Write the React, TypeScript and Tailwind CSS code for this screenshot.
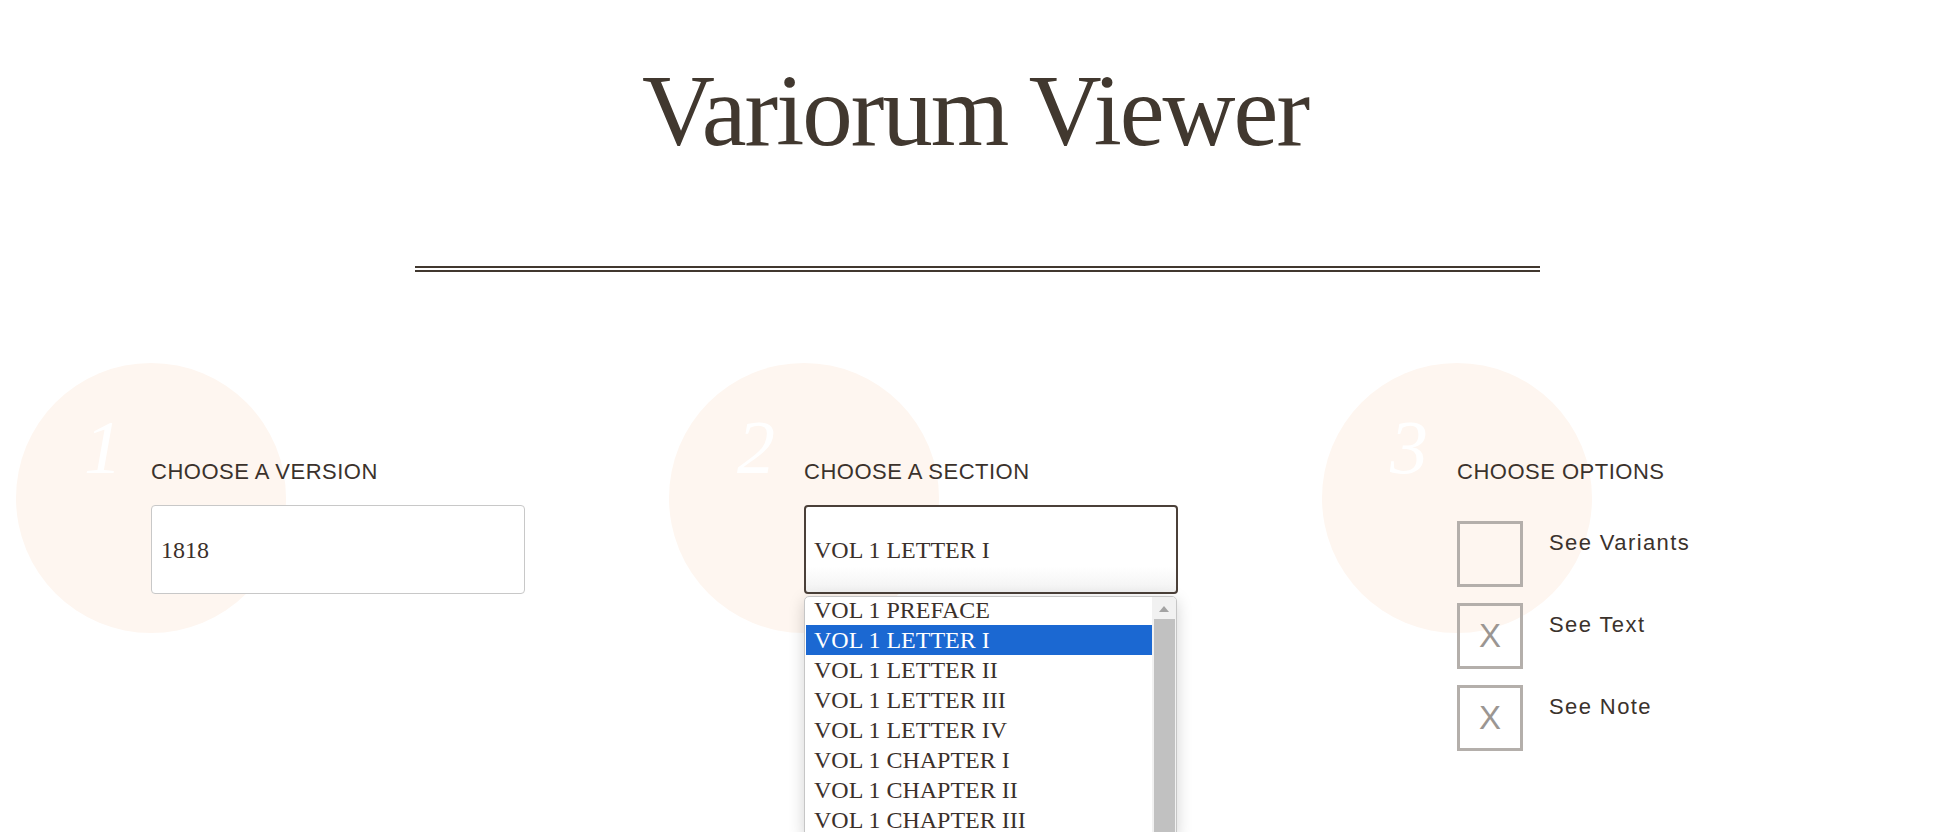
import React from "react";

const sections = [
  "VOL 1 PREFACE",
  "VOL 1 LETTER I",
  "VOL 1 LETTER II",
  "VOL 1 LETTER III",
  "VOL 1 LETTER IV",
  "VOL 1 CHAPTER I",
  "VOL 1 CHAPTER II",
  "VOL 1 CHAPTER III",
];

const options = [
  { label: "See Variants", checked: false },
  { label: "See Text", checked: true },
  { label: "See Note", checked: true },
];

function Step({ n, children }: { n: string; children: React.ReactNode }) {
  return (
    <div className="relative w-[653px] shrink-0">
      <div className="absolute left-0 top-0 size-[270px] rounded-full bg-[#fef6f0]">
        <span className="block pl-[68px] pt-[46px] font-['Liberation_Serif',serif] text-[76px] italic leading-none text-white">
          {n}
        </span>
      </div>
      <div className="relative pl-[135px] pt-[98px]">{children}</div>
    </div>
  );
}

function Heading({ children }: { children: React.ReactNode }) {
  return (
    <h2 className="font-['Liberation_Sans',sans-serif] text-[22px] leading-none tracking-[0.5px] text-[#3b322c]">
      {children}
    </h2>
  );
}

export default function App() {
  return (
    <div className="h-[832px] overflow-hidden bg-white">
      <h1 className="pl-2 pt-[61px] text-center font-['Liberation_Serif',serif] text-[101px] leading-none tracking-[-2px] text-[#41382f]">
        Variorum Viewer
      </h1>
      <div className="mt-[104px] pl-[13px]">
        <div className="mx-auto h-[6px] w-[1125px] border-y-2 border-[#41382f]" />
      </div>

      <div className="mt-[91px] flex pl-[16px]">
        <Step n="1">
          <Heading>CHOOSE A VERSION</Heading>
          <div className="mt-[22px] flex h-[89px] w-[374px] items-center rounded-[4px] border border-[#c8c8c8] bg-white px-[9px] font-['Liberation_Serif',serif] text-[24px] text-[#3b302a]">
            1818
          </div>
        </Step>

        <Step n="2">
          <Heading>CHOOSE A SECTION</Heading>
          <div className="mt-[22px] flex h-[89px] w-[374px] items-center rounded-[4px] border-2 border-[#4b4039] bg-linear-to-b from-white from-70% to-[#f2f2f2] px-[8px] font-['Liberation_Serif',serif] text-[24px] text-[#3b302a]">
            VOL 1 LETTER I
          </div>
          <div className="mt-[2px] flex w-[373px] overflow-hidden rounded-t-[5px] border border-[#c6c6c6] bg-white shadow-[0_4px_16px_rgba(0,0,0,0.18)]">
            <ul className="-mt-[2px] flex-1 pl-px font-['Liberation_Serif',serif] text-[24px] leading-[30px] text-[#3b302a]">
              {sections.map((s, i) => (
                <li key={s} className={i === 1 ? "bg-[#1b68d2] pl-[8px] text-white" : "pl-[8px]"}>
                  {s}
                </li>
              ))}
            </ul>
            <div className="flex w-[24px] flex-col items-center bg-[#f1f1f1]">
              <svg width="10" height="6" viewBox="0 0 10 6" className="mt-[9px]">
                <path d="M5 0L10 6H0Z" fill="#a3a3a3" />
              </svg>
              <div className="mt-[7px] w-[21px] flex-1 bg-[#c1c1c1]" />
            </div>
          </div>
        </Step>

        <Step n="3">
          <Heading>CHOOSE OPTIONS</Heading>
          <div className="mt-[38px] flex flex-col gap-4">
            {options.map((o) => (
              <div key={o.label} className="flex items-start">
                <div className="flex size-[66px] items-center justify-center border-[3px] border-[#b4afab] font-['Liberation_Sans',sans-serif] text-[33px] text-[#9b9692]">
                  {o.checked ? "X" : ""}
                </div>
                <span className="ml-[26px] mt-[11px] font-['Liberation_Sans',sans-serif] text-[22px] leading-none tracking-[1.4px] text-[#3b322c]">
                  {o.label}
                </span>
              </div>
            ))}
          </div>
        </Step>
      </div>
    </div>
  );
}
